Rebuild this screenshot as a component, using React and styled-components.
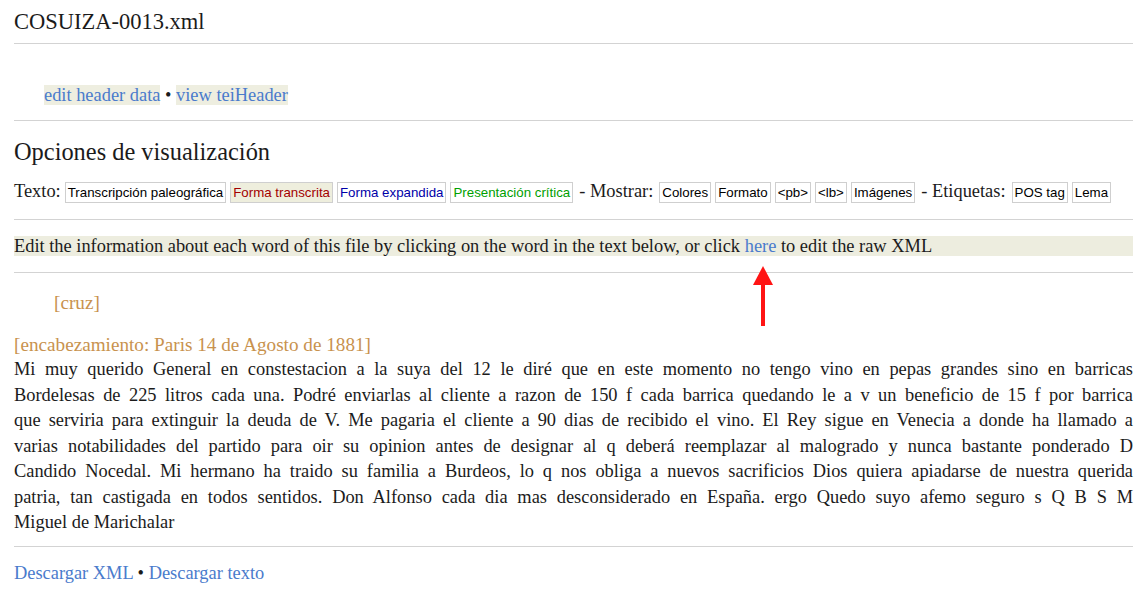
import React from "react";
import styled, { createGlobalStyle } from "styled-components";

const GlobalStyle = createGlobalStyle`
  html, body { margin: 0; padding: 0; background: #ffffff; }
  body {
    font-family: "Liberation Serif", "Times New Roman", serif;
    font-size: 18.4px;
    line-height: 25.5px;
    color: #1b1b1b;
  }
`;

const Page = styled.div`
  position: relative;
  padding: 0 6px 0 14px;
`;

const Title = styled.h1`
  margin: 0;
  font-size: 22.5px;
  font-weight: normal;
  line-height: 43px;
  height: 43px;
`;

const Rule = styled.hr`
  border: none;
  height: 1px;
  margin: 0;
  background: #d3d3d3;
`;

const LinkRow = styled.div`
  padding: ${(p) => p.$pad || "0"};
  line-height: ${(p) => p.$lh || "25.5px"};
`;

const Link = styled.a`
  color: #4a7bcc;
  text-decoration: none;
  background: ${(p) => (p.$boxed ? "#eeeee0" : "transparent")};
`;

const Heading = styled.h2`
  margin: 17px 0 0;
  font-size: 24.4px;
  font-weight: normal;
  line-height: 28px;
`;

const Toolbar = styled.div`
  display: flex;
  align-items: center;
  gap: 4px;
  height: 22px;
  margin: 15px 0 16px;
  white-space: nowrap;
`;

const Label = styled.span`
  font-size: 18.4px;
  margin: ${(p) => p.$m || "0"};
`;

const ToggleButton = styled.button`
  font-family: "Liberation Sans", Arial, sans-serif;
  font-size: 13.3px;
  line-height: 19px;
  height: 21px;
  padding: 0 2px;
  margin: 0;
  border: 1px solid #cfcfcf;
  border-radius: 0;
  background: ${(p) => p.$bg || "#ffffff"};
  color: ${(p) => p.$color || "#000000"};
  cursor: pointer;
`;

const InfoBand = styled.div`
  margin: 16px 0;
  height: 20px;
  line-height: 20px;
  background: #ededdf;
`;

const Annotation = styled.div`
  color: #c8924e;
  font-size: 19.2px;
  line-height: 25.5px;
  padding-left: ${(p) => p.$indent || "0"};
  margin: ${(p) => p.$m || "0"};
`;

const Letter = styled.div`
  margin: 0 0 10px;
  line-height: 25.5px;
`;

const Line = styled.span`
  display: block;
  text-align: ${(p) => (p.$last ? "left" : "justify")};
  text-align-last: ${(p) => (p.$last ? "left" : "justify")};
  white-space: nowrap;
`;

const Footer = styled.div`
  margin-top: 14px;
  line-height: 25.5px;
`;

const Arrow = styled.svg`
  position: absolute;
  left: 752px;
  top: 265px;
  width: 22px;
  height: 62px;
  pointer-events: none;
`;

const lines = [
  "Mi muy querido General en constestacion a la suya del 12 le diré que en este momento no tengo vino en pepas grandes sino en barricas",
  "Bordelesas de 225 litros cada una. Podré enviarlas al cliente a razon de 150 f cada barrica quedando le a v un beneficio de 15 f por barrica",
  "que serviria para extinguir la deuda de V. Me pagaria el cliente a 90 dias de recibido el vino. El Rey sigue en Venecia a donde ha llamado a",
  "varias notabilidades del partido para oir su opinion antes de designar al q deberá reemplazar al malogrado y nunca bastante ponderado D",
  "Candido Nocedal. Mi hermano ha traido su familia a Burdeos, lo q nos obliga a nuevos sacrificios Dios quiera apiadarse de nuestra querida",
  "patria, tan castigada en todos sentidos. Don Alfonso cada dia mas desconsiderado en España. ergo Quedo suyo afemo seguro s Q B S M",
  "Miguel de Marichalar",
];

export default function App() {
  return (
    <>
      <GlobalStyle />
      <Page>
        <Title>COSUIZA-0013.xml</Title>
        <Rule />
        <LinkRow $pad="41px 0 15px 30px" $lh="20px">
          <Link $boxed href="#">edit header data</Link> •{" "}
          <Link $boxed href="#">view teiHeader</Link>
        </LinkRow>
        <Rule />
        <Heading>Opciones de visualización</Heading>
        <Toolbar>
          <Label>Texto:</Label>
          <ToggleButton>Transcripción paleográfica</ToggleButton>
          <ToggleButton $bg="#eeeedd" $color="#a30000">Forma transcrita</ToggleButton>
          <ToggleButton $color="#0000a8">Forma expandida</ToggleButton>
          <ToggleButton $color="#00a000">Presentación crítica</ToggleButton>
          <Label $m="0 2px">- Mostrar:</Label>
          <ToggleButton>Colores</ToggleButton>
          <ToggleButton>Formato</ToggleButton>
          <ToggleButton>&lt;pb&gt;</ToggleButton>
          <ToggleButton>&lt;lb&gt;</ToggleButton>
          <ToggleButton>Imágenes</ToggleButton>
          <Label $m="0 2px">- Etiquetas:</Label>
          <ToggleButton>POS tag</ToggleButton>
          <ToggleButton>Lema</ToggleButton>
        </Toolbar>
        <Rule />
        <InfoBand>
          Edit the information about each word of this file by clicking on the word in the text below, or click{" "}
          <Link href="#">here</Link> to edit the raw XML
        </InfoBand>
        <Rule />
        <Annotation $indent="40px" $m="17px 0 16px">[cruz]</Annotation>
        <Annotation>[encabezamiento: Paris 14 de Agosto de 1881]</Annotation>
        <Letter>
          {lines.map((l, i) => (
            <Line key={i} $last={i === lines.length - 1}>{l}</Line>
          ))}
        </Letter>
        <Rule />
        <Footer>
          <Link href="#">Descargar XML</Link> • <Link href="#">Descargar texto</Link>
        </Footer>
        <Arrow viewBox="0 0 22 62">
          <polygon points="11,1 21,20 1,20" fill="#ff1414" />
          <rect x="9" y="19" width="4" height="42" fill="#ff1414" />
        </Arrow>
      </Page>
    </>
  );
}
